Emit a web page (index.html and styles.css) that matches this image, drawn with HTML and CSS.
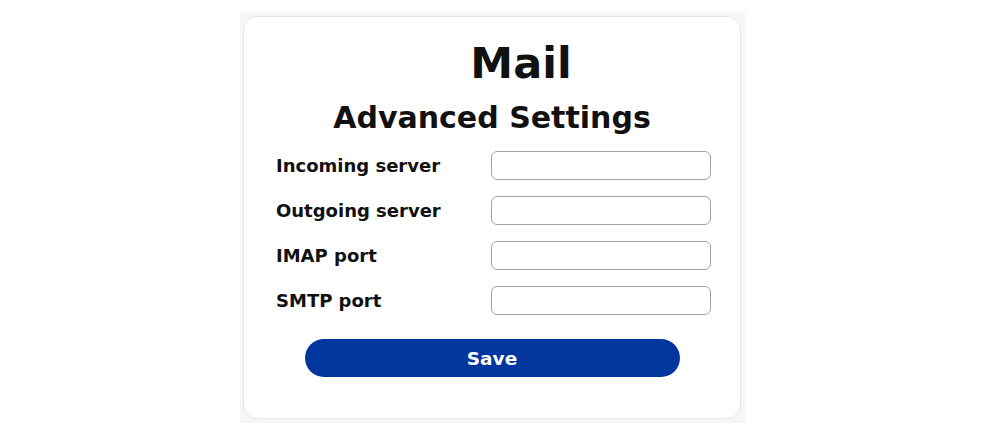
FILE: index.html
```html
<!DOCTYPE html>
<html>
<head>
<meta charset="utf-8">
<link rel="stylesheet" href="styles.css">
</head>
<body>
<div class="panel">
  <div class="card">
    <h1 class="title">Mail</h1>
    <h2 class="subtitle">Advanced Settings</h2>
    <form class="form">
      <div class="row"><label class="label">Incoming server</label><input class="field" type="text"></div>
      <div class="row"><label class="label">Outgoing server</label><input class="field" type="text"></div>
      <div class="row"><label class="label">IMAP port</label><input class="field" type="text"></div>
      <div class="row"><label class="label">SMTP port</label><input class="field" type="text"></div>
      <button class="save" type="button">Save</button>
    </form>
  </div>
</div>
</body>
</html>
```
FILE: styles.css
```css
html, body {
  margin: 0;
  padding: 0;
  background: #ffffff;
  font-family: "DejaVu Sans", "Noto Sans", sans-serif;
  color: #111111;
}
.panel {
  margin: 11px 0 0 240px;
  width: 505px;
  height: 412px;
  box-sizing: border-box;
  padding: 5px 4px 4px 3px;
  background: #f6f6f6;
}
.card {
  box-sizing: border-box;
  height: 403px;
  background: #ffffff;
  border: 1px solid #e6e6e6;
  border-radius: 14px;
  display: flex;
  flex-direction: column;
  align-items: center;
}
.title {
  margin: 21px 0 0 58px;
  font-size: 43px;
  font-weight: 700;
  line-height: 51px;
}
.subtitle {
  margin: 9px 0 0 0;
  font-size: 30px;
  font-weight: 700;
  line-height: 40px;
}
.form {
  margin-top: 13px;
  display: flex;
  flex-direction: column;
  align-items: center;
  gap: 16px;
}
.row {
  display: flex;
  align-items: center;
  width: 435px;
  margin-left: 3px;
}
.label {
  width: 215px;
  font-size: 18px;
  font-weight: 700;
  line-height: 22px;
}
.field {
  box-sizing: border-box;
  width: 220px;
  height: 29px;
  border: 1px solid #a4a4a4;
  border-radius: 6px;
  margin: 0;
  padding: 0 6px;
  background: #fff;
}
.save {
  margin-top: 8px;
  width: 375px;
  height: 38px;
  border: none;
  border-radius: 19px;
  background: #00369e;
  color: #ffffff;
  font-family: "DejaVu Sans", "Noto Sans", sans-serif;
  font-size: 18.5px;
  font-weight: 700;
  padding: 0;
  cursor: pointer;
}
```
